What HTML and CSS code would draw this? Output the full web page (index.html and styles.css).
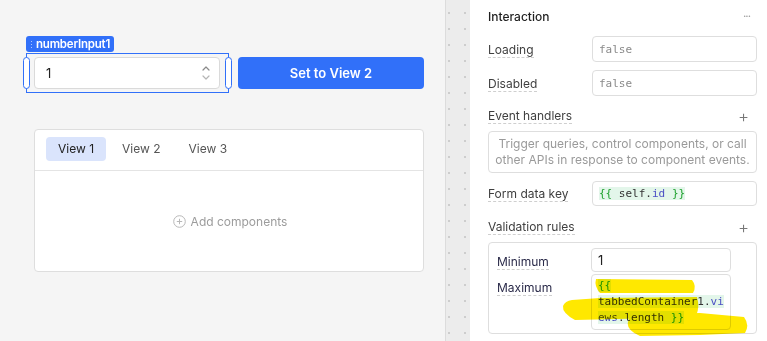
FILE: index.html
```html
<!DOCTYPE html>
<html lang="en">
<head>
    <meta charset="UTF-8">
    <meta name="viewport" content="width=device-width, initial-scale=1.0">
    <title>Number input inspector</title>
    <link rel="stylesheet" href="styles.css">
</head>
<body>
    <div class="app">
        <div class="canvas">
            <div class="top-row">
                <div class="selected">
                    <div class="badge"><span class="grip"></span>numberInput1</div>
                    <div class="frame">
                        <span class="handle handle-left"></span>
                        <div class="number-input">
                            <span>1</span>
                            <svg class="spinner" width="10" height="20" viewBox="0 0 10 20">
                                <path d="M2 7 L5 4 L8 7" fill="none" stroke="#8a8a8a" stroke-width="1.2" stroke-linecap="round" stroke-linejoin="round"/>
                                <path d="M2 13 L5 16 L8 13" fill="none" stroke="#b5b5b5" stroke-width="1.2" stroke-linecap="round" stroke-linejoin="round"/>
                            </svg>
                        </div>
                        <span class="handle handle-right"></span>
                    </div>
                </div>
                <button class="primary-btn">Set to View 2</button>
            </div>

            <div class="tabbed">
                <div class="tabs">
                    <span class="tab active">View 1</span>
                    <span class="tab">View 2</span>
                    <span class="tab">View 3</span>
                </div>
                <div class="tab-body">
                    <span class="add">
                        <svg width="13" height="13" viewBox="0 0 13 13">
                            <circle cx="6.5" cy="6.5" r="5.8" fill="none" stroke="#b8b8b8" stroke-width="1"/>
                            <path d="M6.5 3.8 V9.2 M3.8 6.5 H9.2" stroke="#b8b8b8" stroke-width="1"/>
                        </svg>
                        Add components
                    </span>
                </div>
            </div>
        </div>

        <div class="gutter"></div>

        <div class="inspector">
            <div class="section-head strong">
                <span>Interaction</span>
                <span class="more">···</span>
            </div>
            <div class="field first">
                <span class="label-col"><span class="label">Loading</span></span>
                <div class="value">false</div>
            </div>
            <div class="field">
                <span class="label-col"><span class="label">Disabled</span></span>
                <div class="value">false</div>
            </div>

            <div class="section-head">
                <span class="label">Event handlers</span>
                <span class="plus">+</span>
            </div>
            <div class="empty-box">
                Trigger queries, control components, or call<br>
                other APIs in response to component events.
            </div>

            <div class="field form-key">
                <span class="label-col"><span class="label">Form data key</span></span>
                <div class="value code"><span class="hl"><span class="brace">{{</span> self.<span class="prop">id</span> <span class="brace">}}</span></span></div>
            </div>

            <div class="section-head rules-head">
                <span class="label">Validation rules</span>
                <span class="plus">+</span>
            </div>
            <div class="rules-box">
                <div class="rule-row">
                    <span class="rule-label"><span class="label">Minimum</span></span>
                    <div class="rule-value">1</div>
                </div>
                <div class="rule-row">
                    <span class="rule-label"><span class="label">Maximum</span></span>
                    <div class="rule-value code tall">
                        <span class="line"><span class="hl"><span class="brace">{{</span></span></span>
                        <span class="line"><span class="hl">tabbedContainer1.<span class="prop">vi</span></span></span>
                        <span class="line"><span class="hl"><span class="prop">ews</span>.length <span class="brace">}}</span></span></span>
                    </div>
                </div>
            </div>
        </div>
    </div>

    <!-- highlighter scribble drawn over the Maximum field -->
    <svg class="scribble" width="767" height="341" viewBox="0 0 767 341">
        <g fill="#ffe800">
            <path d="M596 279 L692 280 Q697 286 693 293 L600 293 Q594 286 596 279 Z"/>
            <path d="M572 300 L600 298 L697 297 Q700 307 696 316 L660 318 L575 320 Q562 313 563 306 Q565 301 572 300 Z"/>
            <path d="M630 314 L700 313 L744 317 Q750 325 745 333 L700 335 L640 336 Q626 330 628 322 Z"/>
        </g>
    </svg>
</body>
</html>
```

FILE: styles.css
```css
* {
    margin: 0;
    padding: 0;
    box-sizing: border-box;
}

body {
    position: relative;
    width: 767px;
    height: 341px;
    overflow: hidden;
    font-family: 'Inter', 'Noto Sans', sans-serif;
    color: #222;
    background: #fff;
}

.app {
    display: flex;
    height: 341px;
}

/* canvas */

.canvas {
    width: 445px;
    background: #f5f5f5;
    padding: 36px 0 0 26px;
}

.top-row {
    display: flex;
    align-items: flex-start;
    gap: 9px;
}

.selected {
    width: 203px;
}

.badge {
    display: flex;
    align-items: center;
    gap: 3px;
    width: 88px;
    height: 16px;
    padding: 0 4px;
    background: #3170f9;
    color: #fff;
    font-size: 11.5px;
    font-weight: 600;
    letter-spacing: -0.2px;
    white-space: nowrap;
    border-radius: 3px;
}

.grip {
    width: 3px;
    height: 9px;
    flex-shrink: 0;
    background-image: radial-gradient(circle, rgba(255, 255, 255, 0.6) 0.6px, transparent 0.9px);
    background-size: 3px 3px;
}

.frame {
    position: relative;
    margin-top: 1px;
    height: 40px;
    border: 1px solid #3170f9;
    padding: 3px 8px 0 7px;
}

.handle {
    position: absolute;
    top: 3px;
    width: 7px;
    height: 32px;
    background: #fff;
    border: 1px solid #3170f9;
    border-radius: 4px;
}

.handle-left {
    left: -4px;
}

.handle-right {
    right: -4px;
}

.number-input {
    display: flex;
    align-items: center;
    justify-content: space-between;
    height: 32px;
    background: #fff;
    border: 1px solid #dadada;
    border-radius: 4px;
    padding: 0 8px 0 11px;
    font-size: 13px;
    color: #222;
}

.primary-btn {
    margin-top: 21px;
    width: 186px;
    height: 32px;
    background: #3170f9;
    border: none;
    border-radius: 4px;
    color: #fff;
    font-family: 'Inter', sans-serif;
    font-size: 13px;
    font-weight: 600;
}

.tabbed {
    margin: 36px 0 0 8px;
    width: 390px;
    height: 143px;
    background: #fff;
    border: 1px solid #dedede;
    border-radius: 4px;
}

.tabs {
    display: flex;
    gap: 4px;
    height: 41px;
    padding: 7px 11px 0;
    border-bottom: 1px solid #e4e4e4;
}

.tab {
    height: 24px;
    line-height: 24px;
    padding: 0 12px;
    border-radius: 4px;
    font-size: 12px;
    color: #555;
}

.tab.active {
    background: #dae4fc;
    color: #222;
}

.tab-body {
    display: flex;
    align-items: center;
    justify-content: center;
    height: 100px;
}

.add {
    display: flex;
    align-items: center;
    gap: 5px;
    margin-left: 2px;
    font-size: 12px;
    color: #9c9c9c;
}

/* gutter between canvas and inspector */

.gutter {
    width: 25px;
    border-left: 1px solid #dcdcdc;
    background-color: #ececec;
    background-image: radial-gradient(circle, #cdcdcd 0.8px, transparent 1.1px);
    background-size: 16px 16px;
    background-position: -5px 5px;
}

/* inspector */

.inspector {
    flex: 1;
    padding: 6px 10px 0 18px;
    font-size: 12px;
}

.section-head {
    display: flex;
    align-items: center;
    justify-content: space-between;
    height: 20px;
    margin-top: 10px;
    color: #3a3a3a;
}

.section-head.strong {
    margin-top: 0;
    color: #1f1f1f;
    font-weight: 500;
}

.rules-head {
    margin-top: 11px;
}

.more {
    padding-right: 7px;
    color: #9a9a9a;
    font-size: 11px;
    letter-spacing: -1px;
}

.plus {
    padding-right: 8px;
    font-size: 17px;
    font-weight: 300;
    color: #777;
}

.label {
    color: #3f3f3f;
    font-weight: 400;
    border-bottom: 1px dashed #cfcfcf;
}

.field {
    display: flex;
    align-items: center;
    margin-top: 8px;
}

.field.first {
    margin-top: 10px;
}

.label-col {
    width: 104px;
    flex-shrink: 0;
}

.value {
    flex: 1;
    height: 26px;
    display: flex;
    align-items: center;
    padding: 0 6px;
    border: 1px solid #dedede;
    border-radius: 4px;
    font-family: 'DejaVu Sans Mono', monospace;
    font-size: 11px;
    color: #8a8a8a;
}

.form-key .value {
    height: 25px;
}

.code {
    color: #333;
}

.hl {
    background: #e3f6ea;
}

.brace {
    color: #1fa12e;
}

.prop {
    color: #4b4fc4;
}

.empty-box {
    margin-top: 5px;
    height: 42px;
    padding: 4px 6px;
    border: 1px solid #dedede;
    border-radius: 4px;
    text-align: center;
    line-height: 16px;
    font-size: 12px;
    color: #9a9a9a;
    white-space: nowrap;
}

.rules-box {
    margin-top: 5px;
    padding: 5px 25px 3px 8px;
    border: 1px solid #dedede;
    border-radius: 4px;
}

.rule-row {
    display: flex;
    align-items: flex-start;
}

.rule-row + .rule-row {
    margin-top: 2px;
}

.rule-label {
    width: 94px;
    flex-shrink: 0;
    padding-top: 6px;
    line-height: 16px;
}

.rule-label .label {
    color: #2b2b4a;
}

.rule-value {
    flex: 1;
    height: 24px;
    display: flex;
    align-items: center;
    padding: 0 6px;
    border: 1px solid #dedede;
    border-radius: 4px;
    font-size: 13px;
    color: #222;
}

.rule-value.tall {
    height: 56px;
    flex-direction: column;
    align-items: flex-start;
    padding-top: 3px;
    font-family: 'DejaVu Sans Mono', monospace;
    font-size: 11px;
    line-height: 16px;
    color: #333;
}

.line {
    display: block;
}

.scribble {
    position: absolute;
    top: 0;
    left: 0;
    pointer-events: none;
    mix-blend-mode: multiply;
}
```
